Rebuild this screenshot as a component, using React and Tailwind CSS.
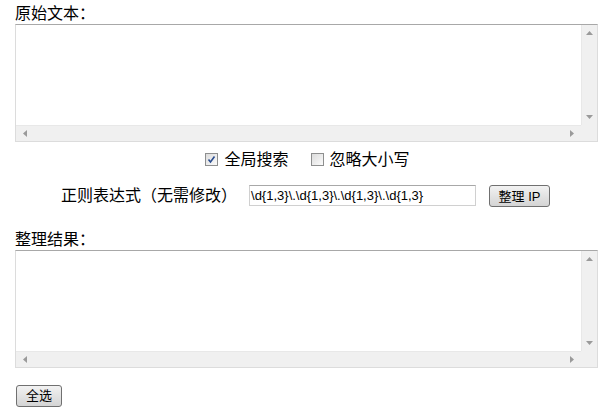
const font = { fontFamily: '"Liberation Sans", "Noto Sans CJK SC", sans-serif' }

function Arrow({ dir }) {
  const pts = {
    up: '0,4 3.5,0 7,4',
    down: '0,0 3.5,4 7,0',
    left: '4,0 0,3.5 4,7',
    right: '0,0 4,3.5 0,7',
  }[dir]
  const vert = dir === 'up' || dir === 'down'
  return (
    <svg width={vert ? 7 : 4} height={vert ? 4 : 7} viewBox={vert ? '0 0 7 4' : '0 0 4 7'}>
      <polygon points={pts} fill="#9a9a9a" />
    </svg>
  )
}

function FakeTextarea() {
  return (
    <div className="w-[583px] h-[118px] border border-[#dcdcdc] border-t-[#a8a8a8] flex flex-col bg-white">
      <div className="flex flex-1">
        <div className="flex-1" />
        <div className="w-[16px] bg-[#f0f0f0] border-l border-[#e8e8e8] flex flex-col items-center justify-between py-[6px]">
          <Arrow dir="up" />
          <Arrow dir="down" />
        </div>
      </div>
      <div className="flex h-[16px]">
        <div className="flex-1 bg-[#f0f0f0] border-t border-[#e8e8e8] flex items-center justify-between px-[7px]">
          <Arrow dir="left" />
          <Arrow dir="right" />
        </div>
        <div className="w-[16px] bg-[#f0f0f0]" />
      </div>
    </div>
  )
}

function Checkbox({ checked }) {
  return (
    <div className="w-[13px] h-[13px] border border-[#8e8f8f] bg-gradient-to-br from-[#dcdcdc] to-[#fbfbfb] flex items-center justify-center">
      {checked && (
        <svg width="9" height="9" viewBox="0 0 9 9">
          <path d="M1.5 4.5 L3.5 7 L7.5 1.5" stroke="#2a4d8f" strokeWidth="1.6" fill="none" />
        </svg>
      )}
    </div>
  )
}

function Btn({ children, w }) {
  return (
    <button className={`h-[22px] ${w} border border-[#707070] rounded-[3px] bg-gradient-to-b from-[#f2f2f2] to-[#d4d4d4] text-[13px] leading-none text-black`}>
      {children}
    </button>
  )
}

export default function App() {
  return (
    <div className="w-[615px] h-[412px] bg-white text-black pl-[15px] pt-[3px]" style={font}>
      <div className="text-[16px] leading-[21px]">原始文本：</div>
      <FakeTextarea />

      <div className="flex items-center justify-center gap-[6px] mt-[11px] h-[13px] text-[16px] pr-[15px]">
        <Checkbox checked />
        <span className="leading-none">全局搜索</span>
        <span className="w-[10px]" />
        <Checkbox />
        <span className="leading-none">忽略大小写</span>
      </div>

      <div className="flex items-center mt-[19px] h-[21px]">
        <span className="ml-[46px] text-[16px] leading-none">正则表达式（无需修改）</span>
        <div className="ml-[12px] w-[227px] h-[21px] border border-[#d0d0d0] border-t-[#a8a8a8] flex items-center px-[1px] text-[13px]">
          \d{'{'}1,3{'}'}\.\d{'{'}1,3{'}'}\.\d{'{'}1,3{'}'}\.\d{'{'}1,3{'}'}
        </div>
        <div className="ml-[13px]">
          <Btn w="w-[61px]">整理 IP</Btn>
        </div>
      </div>

      <div className="text-[16px] leading-[21px] mt-[23px]">整理结果：</div>
      <FakeTextarea />

      <div className="mt-[15px] pl-[1px]">
        <Btn w="w-[46px]">全选</Btn>
      </div>
    </div>
  )
}
